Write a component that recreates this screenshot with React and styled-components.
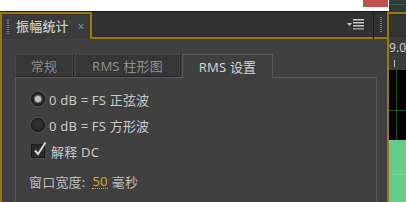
import React from "react";
import styled, { createGlobalStyle } from "styled-components";

const GOLD = "#9c7612";
const FONT = `"Noto Sans", "Noto Sans CJK SC", sans-serif`;

const Global = createGlobalStyle`
  html, body { margin: 0; padding: 0; background: #ffffff; }
  body { font-family: ${FONT}; }
`;

const Frame = styled.div`
  display: flex;
  width: 406px;
  height: 202px;
  overflow: hidden;
`;

const MainColumn = styled.div`
  display: flex;
  flex-direction: column;
  width: 391px;
`;

const TopStrip = styled.div`
  height: 11px;
  display: flex;
  justify-content: flex-end;
  background: #ffffff;
`;

const RedBlock = styled.div`
  width: 25px;
  height: 7px;
  margin-right: 1px;
  background: #c0504d;
`;

const HeaderRow = styled.div`
  display: flex;
  height: 28px;
  background: #1c1c1c;
`;

const PanelTab = styled.div`
  display: flex;
  align-items: center;
  width: 83px;
  margin-top: 1px;
  padding-left: 5px;
  border: 2px solid ${GOLD};
  border-bottom: none;
  background: #3b3b3b;
  color: #c8c8c8;
  font-size: 13px;
  font-weight: 500;
  letter-spacing: 0.2px;
`;

const Grip = styled.div`
  width: 2px;
  height: 15px;
  margin-right: ${(p) => p.$gap || 0}px;
  background-image: repeating-linear-gradient(
    to bottom,
    #8a8a8a 0 1px,
    transparent 1px 2px
  );
  opacity: 0.8;
`;

const TabTitle = styled.span`
  line-height: 1;
`;

const Close = styled.span`
  margin-left: 9px;
  color: #8c8c8c;
  font-size: 12px;
  font-weight: 400;
  line-height: 1;
`;

const HeaderBar = styled.div`
  flex: 1;
  display: flex;
  align-items: center;
  justify-content: flex-end;
  padding-right: 9px;
  border-top: 1px solid #171717;
  border-bottom: 2px solid ${GOLD};
  background: #313131;
`;

const GripCell = styled.div`
  width: 13px;
  display: flex;
  align-items: center;
  justify-content: center;
  margin-left: 1px;
  border-top: 1px solid #171717;
  border-bottom: 2px solid ${GOLD};
  border-right: 2px solid ${GOLD};
  background: #313131;
`;

const Body = styled.div`
  flex: 1;
  display: flex;
  flex-direction: column;
  padding: 15px 10px 0 13px;
  border-left: 2px solid ${GOLD};
  border-right: 2px solid ${GOLD};
  background: #404040;
`;

const TabRow = styled.div`
  display: flex;
  align-items: flex-end;
  gap: 2px;
  height: 23px;
`;

const InnerTab = styled.div`
  position: relative;
  z-index: ${(p) => (p.$active ? 2 : 1)};
  display: flex;
  align-items: center;
  justify-content: center;
  box-sizing: border-box;
  width: ${(p) => p.$width}px;
  height: ${(p) => (p.$active ? 24 : 23)}px;
  margin-bottom: ${(p) => (p.$active ? -1 : 0)}px;
  border: 1px solid ${(p) => (p.$active ? "#555555" : "#474747")};
  border-bottom: ${(p) => (p.$active ? "none" : "1px solid #262626")};
  box-shadow: ${(p) => (p.$active ? "none" : "1px 0 0 #262626")};
  background: ${(p) => (p.$active ? "#404040" : "#363636")};
  color: ${(p) => (p.$active ? "#d0d0d0" : "#8d8d8d")};
  font-size: 13px;
  letter-spacing: 0.2px;
`;

const Content = styled.div`
  flex: 1;
  display: flex;
  flex-direction: column;
  padding: 8px 15px 0 15px;
  border: 1px solid #555555;
  border-bottom: none;
`;

const OptionRow = styled.div`
  display: flex;
  align-items: center;
  height: 26px;
  color: #c8c8c8;
  font-size: 13px;
  letter-spacing: 0.2px;
`;

const Radio = styled.span`
  display: flex;
  align-items: center;
  justify-content: center;
  box-sizing: border-box;
  width: 14px;
  height: 14px;
  margin: 0 4px 0 0;
  border-radius: 50%;
  border: 1px solid #161616;
  background: radial-gradient(circle at 50% 40%, #343434, #252525);
  box-shadow: 0 0 0 1px #4c4c4c;
  &::after {
    content: "";
    display: ${(p) => (p.$checked ? "block" : "none")};
    width: 6px;
    height: 6px;
    border-radius: 50%;
    background: #c4c4c4;
    box-shadow: 0 0 0 1px #707070;
  }
`;

const Check = styled.span`
  position: relative;
  box-sizing: border-box;
  width: 14px;
  height: 14px;
  margin: 0 6px 0 0;
  border: 1px solid #1b1b1b;
  background: #2b2b2b;
  box-shadow: 0 1px 0 #505050;
  svg {
    position: absolute;
    left: 1px;
    top: -4px;
  }
`;

const WidthRow = styled(OptionRow)`
  margin-top: 4px;
  margin-left: -2px;
  color: #bcbcbc;
`;

const Value = styled.span`
  margin: 0 4px 0 7px;
  color: #d8a31c;
  border-bottom: 1px dotted #d8a31c;
  line-height: 14px;
`;

const SidePanel = styled.div`
  flex: 1;
  display: flex;
  flex-direction: column;
  background: #3b3b3b;
`;

const SideTop = styled.div`
  height: 12px;
  border-bottom: 2px solid ${GOLD};
  background: linear-gradient(#2f3b36 0 4px, #3f5a4c 4px 5px, #2f3b36 5px);
`;

const SideHead = styled.div`
  height: 23px;
  background: #333333;
`;

const SideScale = styled.div`
  height: 33px;
  display: flex;
  flex-direction: column;
  align-items: center;
  padding-top: 5px;
  box-sizing: border-box;
  color: #cfcfcf;
  font-size: 12px;
  line-height: 12px;
  white-space: nowrap;
`;

const Tick = styled.div`
  width: 1px;
  height: 7px;
  margin-top: 6px;
  margin-left: -6px;
  background: #bbbbbb;
`;

const Meter = styled.div`
  height: 70px;
  background:
    linear-gradient(to right, transparent 7px, #1c4d1c 7px 8px, transparent 8px),
    linear-gradient(to bottom, transparent 40px, #1c4d1c 40px 41px, transparent 41px),
    #000000;
`;

const MeterFill = styled.div`
  flex: 1;
  background: linear-gradient(#66cc8a 0 34px, #72d295 34px 35px, #66cc8a 35px);
`;

const MenuIcon = () => (
  <svg width="17" height="11" viewBox="0 0 17 11">
    <polygon points="0,4 5,4 2.5,7" fill="#c8c8c8" />
    <rect x="6" y="0" width="11" height="1.5" fill="#c8c8c8" />
    <rect x="6" y="3" width="11" height="1.5" fill="#c8c8c8" />
    <rect x="6" y="6" width="11" height="1.5" fill="#c8c8c8" />
    <rect x="6" y="9" width="11" height="1.5" fill="#9a9a9a" />
  </svg>
);

const CheckMark = () => (
  <svg width="14" height="16" viewBox="0 0 14 16">
    <path d="M2 9.5 L5 13 L12.5 1.5" fill="none" stroke="#d6d6d6" strokeWidth="2" />
  </svg>
);

const tabs = [
  { label: "常规", width: 58 },
  { label: "RMS 柱形图", width: 105 },
  { label: "RMS 设置", width: 91, active: true },
];

export default function App() {
  return (
    <>
      <Global />
      <Frame>
        <MainColumn>
          <TopStrip>
            <RedBlock />
          </TopStrip>
          <HeaderRow>
            <PanelTab>
              <Grip $gap={7} />
              <TabTitle>振幅统计</TabTitle>
              <Close>×</Close>
            </PanelTab>
            <HeaderBar>
              <MenuIcon />
            </HeaderBar>
            <GripCell>
              <Grip />
            </GripCell>
          </HeaderRow>
          <Body>
            <TabRow>
              {tabs.map((t) => (
                <InnerTab key={t.label} $width={t.width} $active={t.active}>
                  {t.label}
                </InnerTab>
              ))}
            </TabRow>
            <Content>
              <OptionRow>
                <Radio $checked />
                0 dB = FS 正弦波
              </OptionRow>
              <OptionRow>
                <Radio />
                0 dB = FS 方形波
              </OptionRow>
              <OptionRow>
                <Check>
                  <CheckMark />
                </Check>
                解释 DC
              </OptionRow>
              <WidthRow>
                窗口宽度:
                <Value>50</Value>
                毫秒
              </WidthRow>
            </Content>
          </Body>
        </MainColumn>
        <SidePanel>
          <SideTop />
          <SideHead />
          <SideScale>
            9.0
            <Tick />
          </SideScale>
          <Meter />
          <MeterFill />
        </SidePanel>
      </Frame>
    </>
  );
}
